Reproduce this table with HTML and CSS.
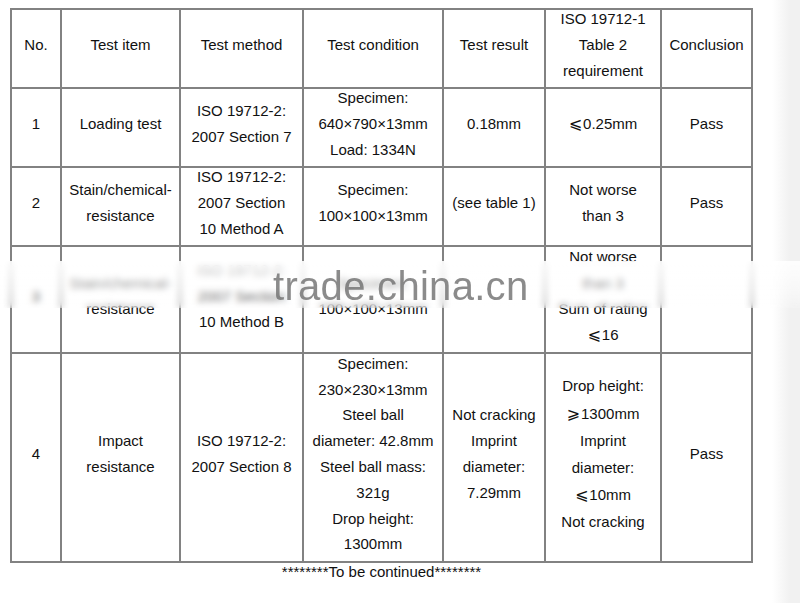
FILE: index.html
```html
<!DOCTYPE html>
<html lang="en">
<head>
<meta charset="utf-8">
<title>Test report</title>
<link rel="stylesheet" href="styles.css">
</head>
<body>
<div class="page">
  <div class="report">
    <div class="cell"><p class="t">No.</p></div>
    <div class="cell"><p class="t">Test item</p></div>
    <div class="cell"><p class="t">Test method</p></div>
    <div class="cell"><p class="t">Test condition</p></div>
    <div class="cell"><p class="t">Test result</p></div>
    <div class="cell"><p class="t">ISO 19712-1<br>Table 2<br>requirement</p></div>
    <div class="cell"><p class="t">Conclusion</p></div>

    <div class="cell"><p class="t">1</p></div>
    <div class="cell"><p class="t">Loading test</p></div>
    <div class="cell"><p class="t">ISO 19712-2:<br>2007 Section 7</p></div>
    <div class="cell"><p class="t">Specimen:<br>640×790×13mm<br>Load: 1334N</p></div>
    <div class="cell"><p class="t">0.18mm</p></div>
    <div class="cell"><p class="t"><span class="sym">⩽</span>0.25mm</p></div>
    <div class="cell"><p class="t">Pass</p></div>

    <div class="cell"><p class="t">2</p></div>
    <div class="cell"><p class="t">Stain/chemical-<br>resistance</p></div>
    <div class="cell"><p class="t">ISO 19712-2:<br>2007 Section<br>10 Method A</p></div>
    <div class="cell"><p class="t">Specimen:<br>100×100×13mm</p></div>
    <div class="cell"><p class="t">(see table 1)</p></div>
    <div class="cell"><p class="t">Not worse<br>than 3</p></div>
    <div class="cell"><p class="t">Pass</p></div>

    <div class="cell"><p class="t">3</p></div>
    <div class="cell"><p class="t">Stain/chemical-<br>resistance</p></div>
    <div class="cell"><p class="t">ISO 19712-2:<br>2007 Section<br>10 Method B</p></div>
    <div class="cell"><p class="t">Specimen:<br>100×100×13mm</p></div>
    <div class="cell"><p class="t"></p></div>
    <div class="cell"><p class="t">Not worse<br>than 3<br>Sum of rating<br><span class="sym">⩽</span>16</p></div>
    <div class="cell"><p class="t"></p></div>

    <div class="cell"><p class="t">4</p></div>
    <div class="cell"><p class="t">Impact<br>resistance</p></div>
    <div class="cell"><p class="t">ISO 19712-2:<br>2007 Section 8</p></div>
    <div class="cell"><p class="t">Specimen:<br>230×230×13mm<br>Steel ball<br>diameter: 42.8mm<br>Steel ball mass:<br>321g<br>Drop height:<br>1300mm</p></div>
    <div class="cell"><p class="t">Not cracking<br>Imprint<br>diameter:<br>7.29mm</p></div>
    <div class="cell"><p class="t tall">Drop height:<br><span class="sym">⩾</span>1300mm<br>Imprint<br>diameter:<br><span class="sym">⩽</span>10mm<br>Not cracking</p></div>
    <div class="cell"><p class="t">Pass</p></div>
  </div>
  <div class="footnote">********To be continued********</div>

  <div class="smear"></div>
  <div class="watermark">trade.china.cn</div>
</div>
</body>
</html>
```
FILE: styles.css
```css
html, body {
  margin: 0;
  padding: 0;
}
body {
  width: 800px;
  height: 603px;
  overflow: hidden;
  background: linear-gradient(to right, #ffffff 0, #ffffff 772px, #f1f1f1 790px, #f1f1f1 800px);
  font-family: "Liberation Sans", Arial, sans-serif;
  color: #111111;
}
.page {
  position: relative;
  width: 800px;
  height: 603px;
  padding-top: 8px;
  box-sizing: border-box;
}
.report {
  margin-left: 10px;
  width: 743px;
  box-sizing: border-box;
  display: grid;
  grid-template-columns: 48px 117px 121px 138px 100px 114px 89px;
  grid-template-rows: 77px 77px 77px 105px 207px;
  gap: 2px;
  padding: 2px;
  background: #828282;
}
.cell {
  background: #fff;
  display: flex;
  align-items: center;
  justify-content: center;
  padding: 0 2px 7px;
}
.t {
  margin: 0;
  text-align: center;
  font-size: 15px;
  line-height: 25.8px;
  white-space: nowrap;
}
.t.tall {
  line-height: 27.2px;
}
.sym {
  font-family: "DejaVu Sans", sans-serif;
  font-size: 16px;
  margin-right: 1px;
}
.footnote {
  margin-left: 10px;
  width: 743px;
  text-align: center;
  font-size: 15px;
  line-height: 18px;
}
.smear {
  position: absolute;
  left: 0;
  top: 261px;
  width: 800px;
  height: 47px;
  backdrop-filter: blur(3px);
  background: linear-gradient(to bottom, rgba(255,255,255,0.85), rgba(255,255,255,0.5) 60%, rgba(255,255,255,0.15));
}
.watermark {
  position: absolute;
  left: 273px;
  top: 266px;
  font-size: 40px;
  line-height: 40px;
  color: rgba(110, 110, 110, 0.8);
  letter-spacing: 0.3px;
}
```
